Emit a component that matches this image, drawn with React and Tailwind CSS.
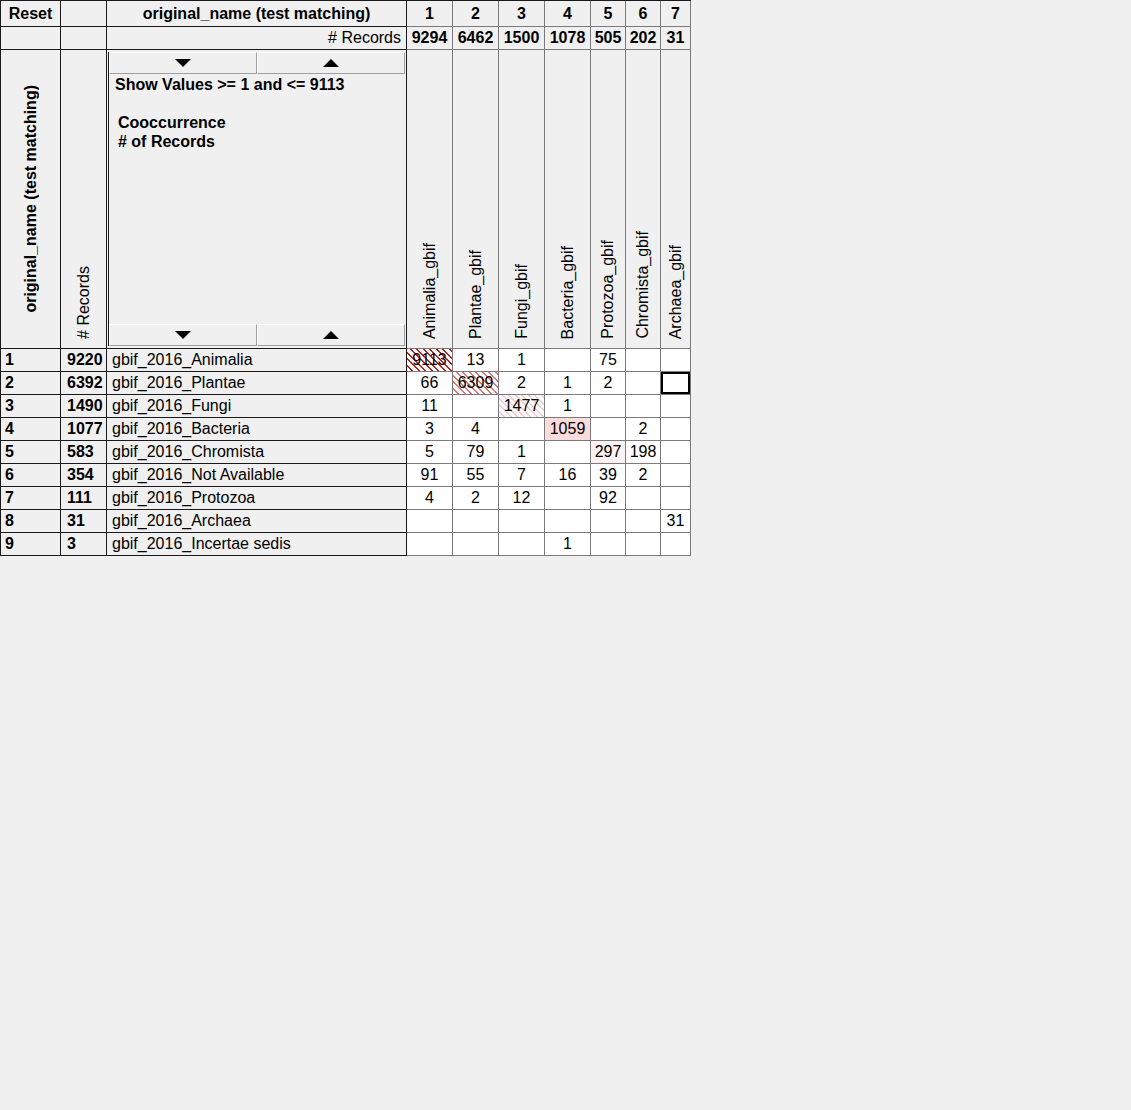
import React from 'react';

// column widths include the 1px right border of each cell
const COLS = ['Animalia_gbif', 'Plantae_gbif', 'Fungi_gbif', 'Bacteria_gbif', 'Protozoa_gbif', 'Chromista_gbif', 'Archaea_gbif'];
const COL_TOTALS = [9294, 6462, 1500, 1078, 505, 202, 31];

const ROWS = [
    [1, 9220, 'gbif_2016_Animalia', [9113, 13, 1, '', 75, '', '']],
    [2, 6392, 'gbif_2016_Plantae', [66, 6309, 2, 1, 2, '', '']],
    [3, 1490, 'gbif_2016_Fungi', [11, '', 1477, 1, '', '', '']],
    [4, 1077, 'gbif_2016_Bacteria', [3, 4, '', 1059, '', 2, '']],
    [5, 583, 'gbif_2016_Chromista', [5, 79, 1, '', 297, 198, '']],
    [6, 354, 'gbif_2016_Not Available', [91, 55, 7, 16, 39, 2, '']],
    [7, 111, 'gbif_2016_Protozoa', [4, 2, 12, '', 92, '', '']],
    [8, 31, 'gbif_2016_Archaea', ['', '', '', '', '', '', 31]],
    [9, 3, 'gbif_2016_Incertae sedis', ['', '', '', 1, '', '', '']],
];

// highlight per "row-col" key
const HIGHLIGHT = {
    '0-0': 'bg-[repeating-linear-gradient(45deg,#ffffff_0px,#ffffff_3.3px,#c41a1a_3.3px,#c41a1a_4.6px)]',
    '1-1': 'bg-[repeating-linear-gradient(45deg,#ffffff_0px,#ffffff_3.3px,#dc7878_3.3px,#dc7878_4.6px)]',
    '2-2': 'bg-[repeating-linear-gradient(45deg,#ffffff_0px,#ffffff_3.3px,#f4cccc_3.3px,#f4cccc_4.6px)]',
    '3-3': 'bg-[#fadcdc]',
    '4-4': 'bg-[#fdf1f1]',
};

const ArrowDown = () => (
    <svg width="16" height="8" viewBox="0 0 16 8"><polygon points="0,0 16,0 8,8" fill="#000" /></svg>
);
const ArrowUp = () => (
    <svg width="16" height="8" viewBox="0 0 16 8"><polygon points="0,8 16,8 8,0" fill="#000" /></svg>
);

const Button = ({ children }) => (
    <div className="flex-1 h-[22px] flex items-center justify-center bg-[#f0f0f0] border-t border-l border-t-white border-l-white border-b border-r border-b-[#a0a0a0] border-r-[#a0a0a0]">
        {children}
    </div>
);

const ButtonRow = () => (
    <div className="flex">
        <Button><ArrowDown /></Button>
        <Button><ArrowUp /></Button>
    </div>
);

const hdr = 'border-r border-b border-[#1a1a1a] bg-[#f0f0f0]';
const mat = 'border-r border-b border-[#7a7a7a]';

export default function App() {
    return (
        <div className="w-full h-[1110px] bg-[#f0f0f0] text-[16px] text-black font-['Liberation_Sans',Arial,sans-serif]">
            <div className="grid grid-cols-[60px_46px_300px_46px_46px_46px_46px_35px_35px_30px] grid-rows-[26px_23px_299px_repeat(9,23px)] w-fit border-l border-t border-[#1a1a1a] leading-none">
                {/* header row: titles + column indexes */}
                <div className={`${hdr} flex items-center justify-center font-bold`}>Reset</div>
                <div className={hdr}></div>
                <div className={`${hdr} flex items-center justify-center font-bold`}>original_name (test matching)</div>
                {COLS.map((c, i) => (
                    <div key={c} className={`${mat} bg-[#f0f0f0] flex items-center justify-center font-bold`}>{i + 1}</div>
                ))}

                {/* totals row */}
                <div className={hdr}></div>
                <div className={hdr}></div>
                <div className={`${hdr} flex items-center justify-end pr-[5px]`}># Records</div>
                {COL_TOTALS.map((t, i) => (
                    <div key={i} className={`${mat} bg-[#f0f0f0] flex items-center justify-center font-bold`}>{t}</div>
                ))}

                {/* big header row */}
                <div className={`${hdr} flex items-center justify-center`}>
                    <span className="[writing-mode:vertical-rl] rotate-180 font-bold whitespace-nowrap">original_name (test matching)</span>
                </div>
                <div className={`${hdr} flex items-end justify-center pb-[9px]`}>
                    <span className="[writing-mode:vertical-rl] rotate-180 whitespace-nowrap"># Records</span>
                </div>
                <div className={`${hdr} pl-px pr-px pt-[2px] pb-[2px]`}>
                    <div className="h-full flex flex-col border-l border-[#1a1a1a]">
                        <ButtonRow />
                        <div className="pl-[6px] pt-[1px] font-bold leading-[19px]">Show Values &gt;= 1 and &lt;= 9113</div>
                        <div className="pl-[9px] pt-[19px] font-bold leading-[19px]">
                            <div>Cooccurrence</div>
                            <div># of Records</div>
                        </div>
                        <div className="flex-1"></div>
                        <ButtonRow />
                    </div>
                </div>
                {COLS.map((c) => (
                    <div key={c} className={`${mat} bg-[#f0f0f0] flex items-end justify-center pb-[9px]`}>
                        <span className="[writing-mode:vertical-rl] rotate-180 whitespace-nowrap">{c}</span>
                    </div>
                ))}

                {/* data rows */}
                {ROWS.map(([n, total, name, vals], r) => (
                    <React.Fragment key={n}>
                        <div className={`${hdr} flex items-center pl-[4px] font-bold`}>{n}</div>
                        <div className={`${hdr} flex items-center pl-[6px] font-bold`}>{total}</div>
                        <div className={`${hdr} flex items-center pl-[5px]`}>{name}</div>
                        {vals.map((v, c) => (
                            <div
                                key={c}
                                className={`${mat} flex items-center justify-center ${HIGHLIGHT[`${r}-${c}`] || 'bg-white'}`}
                            >
                                {r === 1 && c === 6 ? (
                                    <div className="w-full h-full border-2 border-black"></div>
                                ) : (
                                    v
                                )}
                            </div>
                        ))}
                    </React.Fragment>
                ))}
            </div>
        </div>
    );
}
